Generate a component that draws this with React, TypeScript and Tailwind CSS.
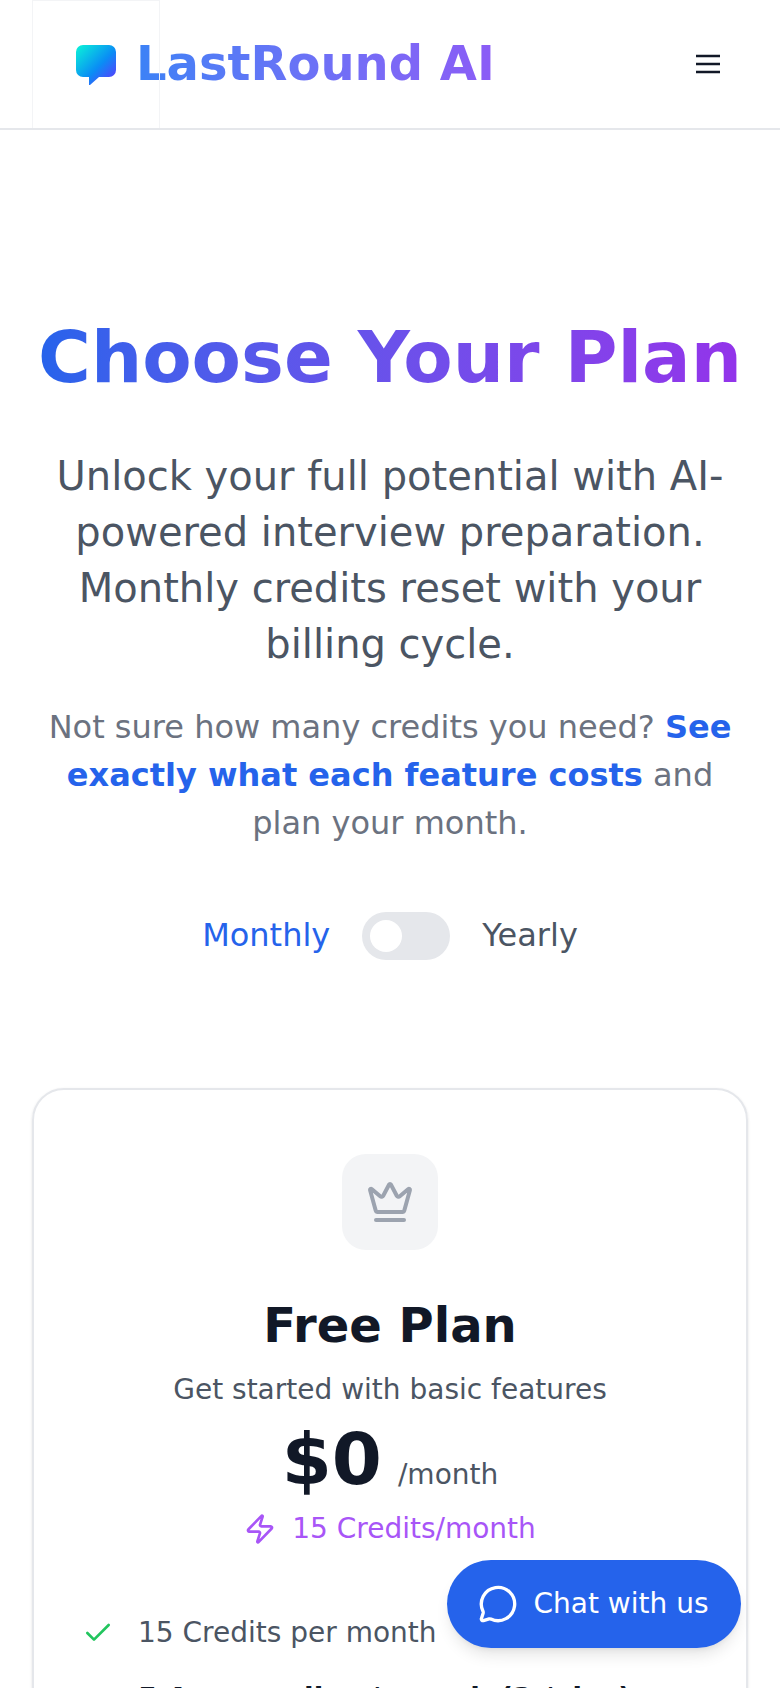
import { Crown, Zap, Check, MessageCircle } from "lucide-react";

export default function App() {
  return (
    <div className="relative h-[1688px] overflow-hidden bg-white font-['DejaVu_Sans',sans-serif]">
      <header className="flex h-[130px] items-center justify-between border-b-2 border-[#e5e7eb] pl-8 pr-[60px]">
        <div className="flex h-full items-center">
          <div className="relative flex h-full w-[128px] items-center justify-center border-x border-t border-[#f3f4f6]">
            <svg width="42" height="42" viewBox="0 0 42 42">
              <defs>
                <linearGradient id="lg" x1="0" y1="0" x2="1" y2="1">
                  <stop offset="0" stopColor="#0af5d8" />
                  <stop offset="0.55" stopColor="#0a8df5" />
                  <stop offset="1" stopColor="#6a2bff" />
                </linearGradient>
              </defs>
              <path d="M8 1H34A7 7 0 0 1 41 8V26A7 7 0 0 1 34 33H24L15 41H14V33H8A7 7 0 0 1 1 26V8A7 7 0 0 1 8 1Z" fill="url(#lg)" />
            </svg>
          </div>
          <span className="mb-[2px] -ml-[24px] bg-gradient-to-r from-[#3b82f6] to-[#8b5cf6] bg-clip-text text-[48px] font-bold text-transparent">LastRound AI</span>
        </div>
        <svg width="24" height="24" viewBox="0 0 24 24" className="text-[#111827]">
          <path d="M0 4H24M0 12H24M0 20H24" stroke="currentColor" strokeWidth="2.4" fill="none" />
        </svg>
      </header>

      <main className="px-8">
        <section className="flex flex-col items-center pt-[191px] text-center">
          <h1 className="bg-gradient-to-r from-[#2563eb] to-[#9333ea] bg-clip-text text-[72px] leading-[72px] font-bold text-transparent">Choose Your Plan</h1>
          <p className="mt-[55px] w-full text-[40px] leading-[56px] text-[#4b5563]">Unlock your full potential with AI-powered interview preparation. Monthly credits reset with your billing cycle.</p>
          <p className="mt-[31px] w-[700px] text-[32px] leading-[48px] text-[#6b7280]">
            Not sure how many credits you need? <span className="font-bold text-[#2563eb]">See exactly what each feature costs</span> and plan your month.
          </p>
          <div className="mt-[64px] flex items-start gap-8 text-[32px]">
            <span className="text-[#2563eb]">Monthly</span>
            <div className="mt-px flex h-12 w-[88px] items-center rounded-full bg-[#e5e7eb] pl-2">
              <div className="h-8 w-8 rounded-full bg-white" />
            </div>
            <span className="text-[#4b5563]">Yearly</span>
          </div>
        </section>

        <section className="mt-[128px] h-[900px] rounded-[32px] border-2 border-[#e5e7eb] px-[48px] pt-[64px] shadow-sm">
          <div className="flex flex-col items-center text-center">
            <div className="flex h-24 w-24 items-center justify-center rounded-3xl bg-[#f3f4f6]">
              <Crown size={48} className="text-[#9ca3af]" />
            </div>
            <h2 className="mt-[47px] text-[48px] leading-[56px] font-bold text-[#111827]">Free Plan</h2>
            <p className="mt-[17px] text-[28px] leading-[40px] text-[#4b5563]">Get started with basic features</p>
            <div className="mt-[9px] flex items-baseline gap-4">
              <span className="text-[72px] leading-[80px] font-bold text-[#111827]">$0</span>
              <span className="text-[28px] text-[#4b5563]">/month</span>
            </div>
            <div className="mt-[9px] flex items-center gap-4 text-[28px] text-[#a855f7]">
              <Zap size={32} />
              <span>15 Credits/month</span>
            </div>
          </div>
          <ul className="mt-[63px] flex flex-col gap-[26px] text-[28px] leading-[40px]">
            <li className="flex items-center gap-6 text-[#4b5563]">
              <Check size={32} className="text-[#22c55e]" />
              <span>15 Credits per month</span>
            </li>
            <li className="pl-[56px] font-bold text-[#111827]">5 Auto replies / month (3 / day)</li>
          </ul>
        </section>
      </main>

      <button className="absolute left-[447px] top-[1560px] flex h-[88px] w-[294px] items-center justify-center gap-4 rounded-full bg-[#2563eb] pr-[2px] text-[28px] text-white shadow-lg">
        <MessageCircle size={40} />
        <span>Chat with us</span>
      </button>
    </div>
  );
}
